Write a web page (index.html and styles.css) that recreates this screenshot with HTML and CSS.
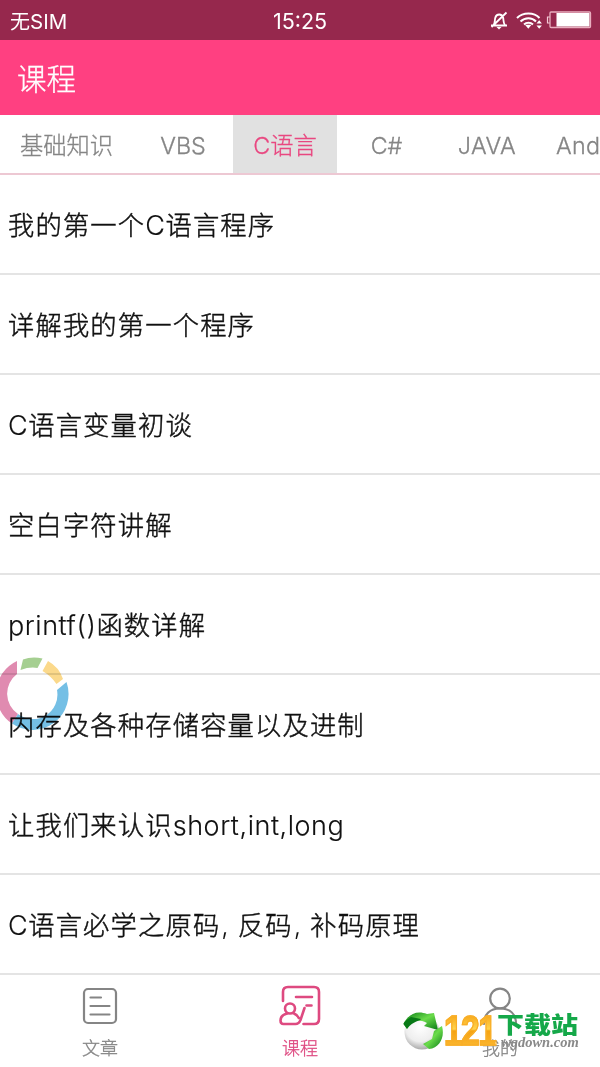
FILE: index.html
```html
<!DOCTYPE html>
<html lang="zh-CN">
<head>
<meta charset="utf-8">
<title>课程</title>
<link rel="stylesheet" href="styles.css">
</head>
<body>
<div class="app">
  <div class="status">
    <span class="carrier">无<span class="sim">SIM</span></span>
    <span class="clock">15:25</span>
    <svg class="status-icons" width="112" height="24" viewBox="0 0 112 24" fill="none" stroke="#fff">
      <path d="M2 16.500h16M4.500 16c1.700-2 1.200-5 1.700-7 .6-2.400 2-3.500 4-3.500s3.500 1.400 4 3.500c.4 2 0 5 1.700 7M2.500 18L17.500 3.500" stroke-width="1.800"/>
      <path d="M7.500 18h5l-2.500 2.500z" fill="#fff" stroke="none"/>
      <path d="M28 9c6-6 17-6 22.500 0M31.500 12.500c4.500-4.300 11.500-4.300 15.500 0M35 15.500c2.500-2.300 6.500-2.300 9 0" stroke-width="2"/>
      <path d="M36 15.800h6.500l-3.200 4z" fill="#fff" stroke="none"/>
      <path d="M47.500 14.500l2.700-3.200 2.700 3.200zM47.500 16.500l2.700 3.200 2.700-3.200z" fill="#fff" stroke="none"/>
      <path d="M61 8h-2.500v6H61" stroke="#f3c9d6" stroke-width="1.200"/>
      <rect x="61" y="3" width="40.500" height="15.500" rx="1" stroke="#e9aebf" stroke-width="1.300"/>
      <rect x="67.500" y="4" width="33" height="13.500" fill="#fff" stroke="none"/>
    </svg>
  </div>
  <header class="header">课程</header>
  <nav class="tabs">
    <span class="tab t1">基础知识</span>
    <span class="tab t2">VBS</span>
    <span class="tab t3 active">C语言</span>
    <span class="tab t4">C#</span>
    <span class="tab t5">JAVA</span>
    <span class="tab t6">And</span>
  </nav>
  <main class="list">
    <div class="row">我的第一个<span class="latin">C</span>语言程序</div>
    <div class="row">详解我的第一个程序</div>
    <div class="row"><span class="latin">C</span>语言变量初谈</div>
    <div class="row">空白字符讲解</div>
    <div class="row"><span class="latin">printf()</span>函数详解</div>
    <div class="row">内存及各种存储容量以及进制</div>
    <div class="row">让我们来认识<span class="latin">short,int,long</span></div>
    <div class="row"><span class="latin">C</span>语言必学之原码<span class="comma">,</span>反码<span class="comma">,</span>补码原理</div>
  </main>
  <footer class="nav">
    <div class="item">
      <svg width="44" height="44" viewBox="0 0 44 44" fill="none" stroke="#858585" stroke-width="2.200" stroke-linecap="round">
        <rect x="6" y="6" width="32" height="34" rx="4"/>
        <path d="M12.500 14.500h10.500M12.500 23h19M12.500 31.500h19"/>
      </svg>
      <span>文章</span>
    </div>
    <div class="item on">
      <svg width="44" height="44" viewBox="0 0 44 44" fill="none" stroke="#de4a80" stroke-width="2.600" stroke-linecap="round" stroke-linejoin="round">
        <path d="M5 18V9c0-3.500 1.500-5 5-5h26c3.500 0 5 2 5 5v27c0 3.500-2 5-5 5H25.500M18 14h16M28.500 22.500h5"/>
        <circle cx="12" cy="25.500" r="5"/>
        <path d="M9 30.500c-4 1-6.500 3.500-6.500 7 0 2.200 1 3.500 3 3.500h12c3 0 4-1.500 5-4l4-12M16 30.500c2.500 1 4 2.500 4.800 4.500"/>
      </svg>
      <span>课程</span>
    </div>
    <div class="item">
      <svg width="44" height="44" viewBox="0 0 44 44" fill="none" stroke="#858585" stroke-width="2.200" stroke-linecap="round">
        <circle cx="22" cy="15.500" r="9.800"/>
        <path d="M6 41c0-10 6-15.500 16-15.500S38 31 38 41"/>
      </svg>
      <span>我的</span>
    </div>
  </footer>

  <svg class="ring" width="72" height="76" viewBox="0 0 72 76">
    <path d="M18 6A36 36 0 0 0 13 68.500L19 59A24.500 24.500 0 0 1 18 19z" fill="#e08bb0"/>
    <path d="M13 68.500A36 36 0 0 0 67.500 27L58 35A24.500 24.500 0 0 1 19 59z" fill="#74bfe5"/>
    <path d="M24 4.500Q33 1 43.500 3.500L38.500 13Q31 11.500 21.500 15z" fill="#a5cf91"/>
    <path d="M49 6Q60 12 64 24L57.500 29Q52 21 43.500 16z" fill="#fbd98b"/>
  </svg>

  <div class="watermark">
    <svg class="globe" width="42" height="44" viewBox="0 0 42 44">
      <defs>
        <radialGradient id="ball" cx=".45" cy=".35" r=".65"><stop offset="0" stop-color="#fff"/><stop offset=".65" stop-color="#eee"/><stop offset="1" stop-color="#aaa"/></radialGradient>
        <linearGradient id="leaf" x2="1" y2="1"><stop stop-color="#087b16"/><stop offset=".5" stop-color="#6bdc4b"/><stop offset="1" stop-color="#087916"/></linearGradient>
      </defs>
      <circle cx="20" cy="24" r="17.500" fill="url(#ball)"/>
      <path d="M1.500 16C6 6 15 2 25 6l7-1 4 17-14-4 3-3C15 10 7 13 5 21z" fill="url(#leaf)"/>
      <path d="M32 23l8-5c3 11-2 22-13 23l-6-5 9-5z" fill="url(#leaf)"/>
      <path d="M5 21C12 12 17 14 19 11L9 9C4 12 2 14 1.500 16z" fill="#087916"/>
    </svg>
    <span class="num">121</span>
    <span class="site"><b>下载站</b><i>wgdown.com</i></span>
  </div>
</div>
</body>
</html>
```

FILE: styles.css
```css
* { box-sizing: border-box; }
body { margin: 0; background: #fff; font-family: Inter, "Noto Sans CJK SC", sans-serif; font-weight: 300; }
.app { position: relative; width: 600px; height: 1067px; overflow: hidden; display: flex; flex-direction: column; }
.status { height: 40px; flex: none; background: #96284d; color: #fff; display: grid; grid-template-columns: 1fr auto 1fr; align-items: center; padding: 0 0 0 10px; }
.carrier { font-size: 20px; font-weight: 400; }
.sim { font-size: 20.5px; }
.clock { font-size: 21.5px; font-weight: 400; padding-top: 2px; margin-left: -10px; }
.status-icons { justify-self: end; margin: 2px -1px 0 0; }
.header { height: 75px; flex: none; background: #ff4081; color: #fff; font-size: 29.5px; line-height: 79px; padding-left: 17px; -webkit-text-stroke: .3px; }
.tabs { height: 60px; flex: none; display: flex; border-bottom: 2px solid #edc8d3; color: #858585; font-size: 23.3px; line-height: 61px; white-space: nowrap; overflow: hidden; -webkit-text-stroke: .3px; }
.tab { flex: none; text-align: center; }
.t1 { width: 133px; }
.t2 { width: 100px; }
.t3 { width: 104px; }
.t4 { width: 99px; }
.t5 { width: 102px; letter-spacing: .5px; }
.t6 { padding-left: 18px; letter-spacing: .3px; }
.active { background: #e1e1e1; color: #e94880; }
.list { flex: none; }
.row { height: 100px; padding-left: 8px; border-bottom: 2px solid #e4e4e4; color: #111; font-size: 26.3px; line-height: 102px; letter-spacing: 1.15px; white-space: nowrap; -webkit-text-stroke: .45px; }
.latin { font-size: 27px; letter-spacing: .55px; -webkit-text-stroke: .15px; }
.comma { display: inline-block; width: 17.5px; padding-left: 1px; -webkit-text-stroke: 0; }
.nav { flex: 1; display: grid; grid-template-columns: repeat(3, 1fr); color: #858585; }
.item { display: flex; flex-direction: column; align-items: center; padding-top: 8px; font-size: 18px; line-height: 26px; -webkit-text-stroke: .3px; }
.item span { margin-top: 9px; }
.on { color: #de4a80; }
.ring { position: absolute; left: -1px; top: 655px; mix-blend-mode: multiply; }
.watermark { position: absolute; left: 402px; top: 1008px; display: flex; }
.num { width: 66px; margin-right: -13px; font: 700 43px/44px "Liberation Sans", sans-serif; letter-spacing: -2px; color: transparent; background: linear-gradient(#f8ad1f 20%, #ffd34d 48%, #f5a312 52%, #fbb832 90%); background-clip: text; -webkit-background-clip: text; -webkit-text-stroke: 1.5px #f9ae28; transform: scaleX(.78); transform-origin: 0 50%; }
.site { display: flex; flex-direction: column; margin-top: 1px; }
.site b { height: 26px; font: 900 27px/30px "Noto Sans CJK SC", sans-serif; color: #15a849; transform: scaleY(.86); transform-origin: 0 50%; }
.site i { margin: 0 0 0 4px; font: italic bold 14.5px/15px "Liberation Serif", serif; color: #898989; }
```
